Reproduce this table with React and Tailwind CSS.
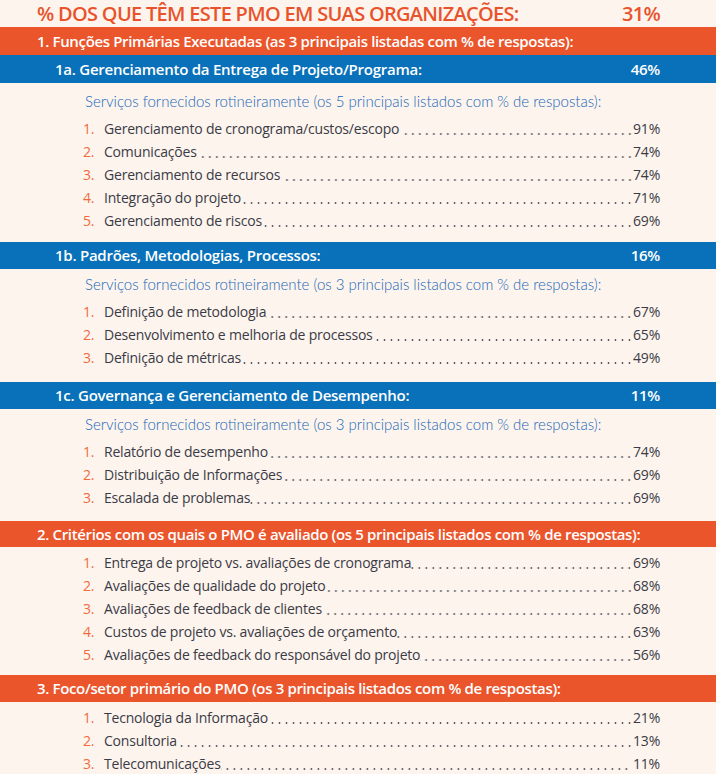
const groups = [
  {
    title: "1. Funções Primárias Executadas (as 3 principais listadas com % de respostas):",
    bar: "h-[28px]",
    subs: [
      {
        title: "1a. Gerenciamento da Entrega de Projeto/Programa:",
        pct: "46%",
        bar: "h-[28px]",
        note: "Serviços fornecidos rotineiramente (os 5 principais listados com % de respostas):",
        noteTop: "pt-[6px]",
        pb: "pb-[10px]",
        items: [
          ["Gerenciamento de cronograma/custos/escopo ", "91%"],
          ["Comunicações", "74%"],
          ["Gerenciamento de recursos ", "74%"],
          ["Integração do projeto", "71%"],
          ["Gerenciamento de riscos", "69%"],
        ],
      },
      {
        title: "1b. Padrões, Metodologias, Processos:",
        pct: "16%",
        bar: "h-[27px]",
        note: "Serviços fornecidos rotineiramente (os 3 principais listados com % de respostas):",
        noteTop: "pt-[3px]",
        pb: "pb-[13px]",
        items: [
          ["Definição de metodologia", "67%"],
          ["Desenvolvimento e melhoria de processos ", "65%"],
          ["Definição de métricas", "49%"],
        ],
      },
      {
        title: "1c. Governança e Gerenciamento de Desempenho:",
        pct: "11%",
        bar: "h-[27px]",
        note: "Serviços fornecidos rotineiramente (os 3 principais listados com % de respostas):",
        noteTop: "pt-[3px]",
        pb: "pb-[12px]",
        items: [
          ["Relatório de desempenho ", "74%"],
          ["Distribuição de Informações", "69%"],
          ["Escalada de problemas", "69%"],
        ],
      },
    ],
  },
  {
    title: "2. Critérios com os quais o PMO é avaliado (os 5 principais listados com % de respostas):",
    bar: "h-[26px]",
    pb: "pb-[9px]",
    items: [
      ["Entrega de projeto vs. avaliações de cronograma", "69%"],
      ["Avaliações de qualidade do projeto", "68%"],
      ["Avaliações de feedback de clientes ", "68%"],
      ["Custos de projeto vs. avaliações de orçamento", "63%"],
      ["Avaliações de feedback do responsável do projeto", "56%"],
    ],
  },
  {
    title: "3. Foco/setor primário do PMO (os 3 principais listados com % de respostas):",
    bar: "h-[27px]",
    pb: "pb-[4px]",
    items: [
      ["Tecnologia da Informação", "21%"],
      ["Consultoria", "13%"],
      ["Telecomunicações", " 11%"],
    ],
  },
];

function ItemList({ items, className }) {
  return (
    <ol className={className}>
      {items.map(([label, pct], i) => (
        <li key={label} className="flex h-[23px] items-center pl-[83px] pr-[56px] text-[14px] tracking-[-0.2px] text-[#3a3b45]">
          <span className="w-[21px] shrink-0 text-[#f06b3c]">{i + 1}.</span>
          <span className="whitespace-pre">{label}</span>
          <span className="h-[23px] flex-1 bg-[radial-gradient(circle,#55555c_0.8px,transparent_1.2px)] bg-[length:7px_4px] bg-[position:right_0_bottom_4px] bg-repeat-x" />
          <span className="whitespace-pre">{pct}</span>
        </li>
      ))}
    </ol>
  );
}

export default function App() {
  return (
    <div className="h-[774px] overflow-hidden bg-[#fdf4ee] font-['Open_Sans',sans-serif]">
      <div className="flex h-[27px] items-center justify-between pl-[37px] pr-[56px] text-[20px] font-semibold tracking-[-0.7px] text-[#e8532b]">
        <span>% DOS QUE TÊM ESTE PMO EM SUAS ORGANIZAÇÕES:</span>
        <span>31%</span>
      </div>

      {groups.map((g) => (
        <div key={g.title}>
          <div className={`flex items-center whitespace-nowrap bg-[#ea552c] pl-[37px] text-[15px] font-semibold tracking-[-0.35px] text-white ${g.bar}`}>
            {g.title}
          </div>

          {g.subs
            ? g.subs.map((s) => (
                <div key={s.title} className={s.pb}>
                  <div className={`flex items-center justify-between whitespace-nowrap bg-[#0871b9] pl-[55px] pr-[56px] text-[15px] font-semibold tracking-[-0.25px] text-white ${s.bar}`}>
                    <span>{s.title}</span>
                    <span>{s.pct}</span>
                  </div>
                  <p className={`pl-[85px] font-['Lato',sans-serif] text-[15px] font-light leading-[24px] text-[#1667b8] ${s.noteTop}`}>
                    {s.note}
                  </p>
                  <ItemList items={s.items} className="mt-[4px]" />
                </div>
              ))
            : <ItemList items={g.items} className={`pt-[4px] ${g.pb}`} />}
        </div>
      ))}
    </div>
  );
}
